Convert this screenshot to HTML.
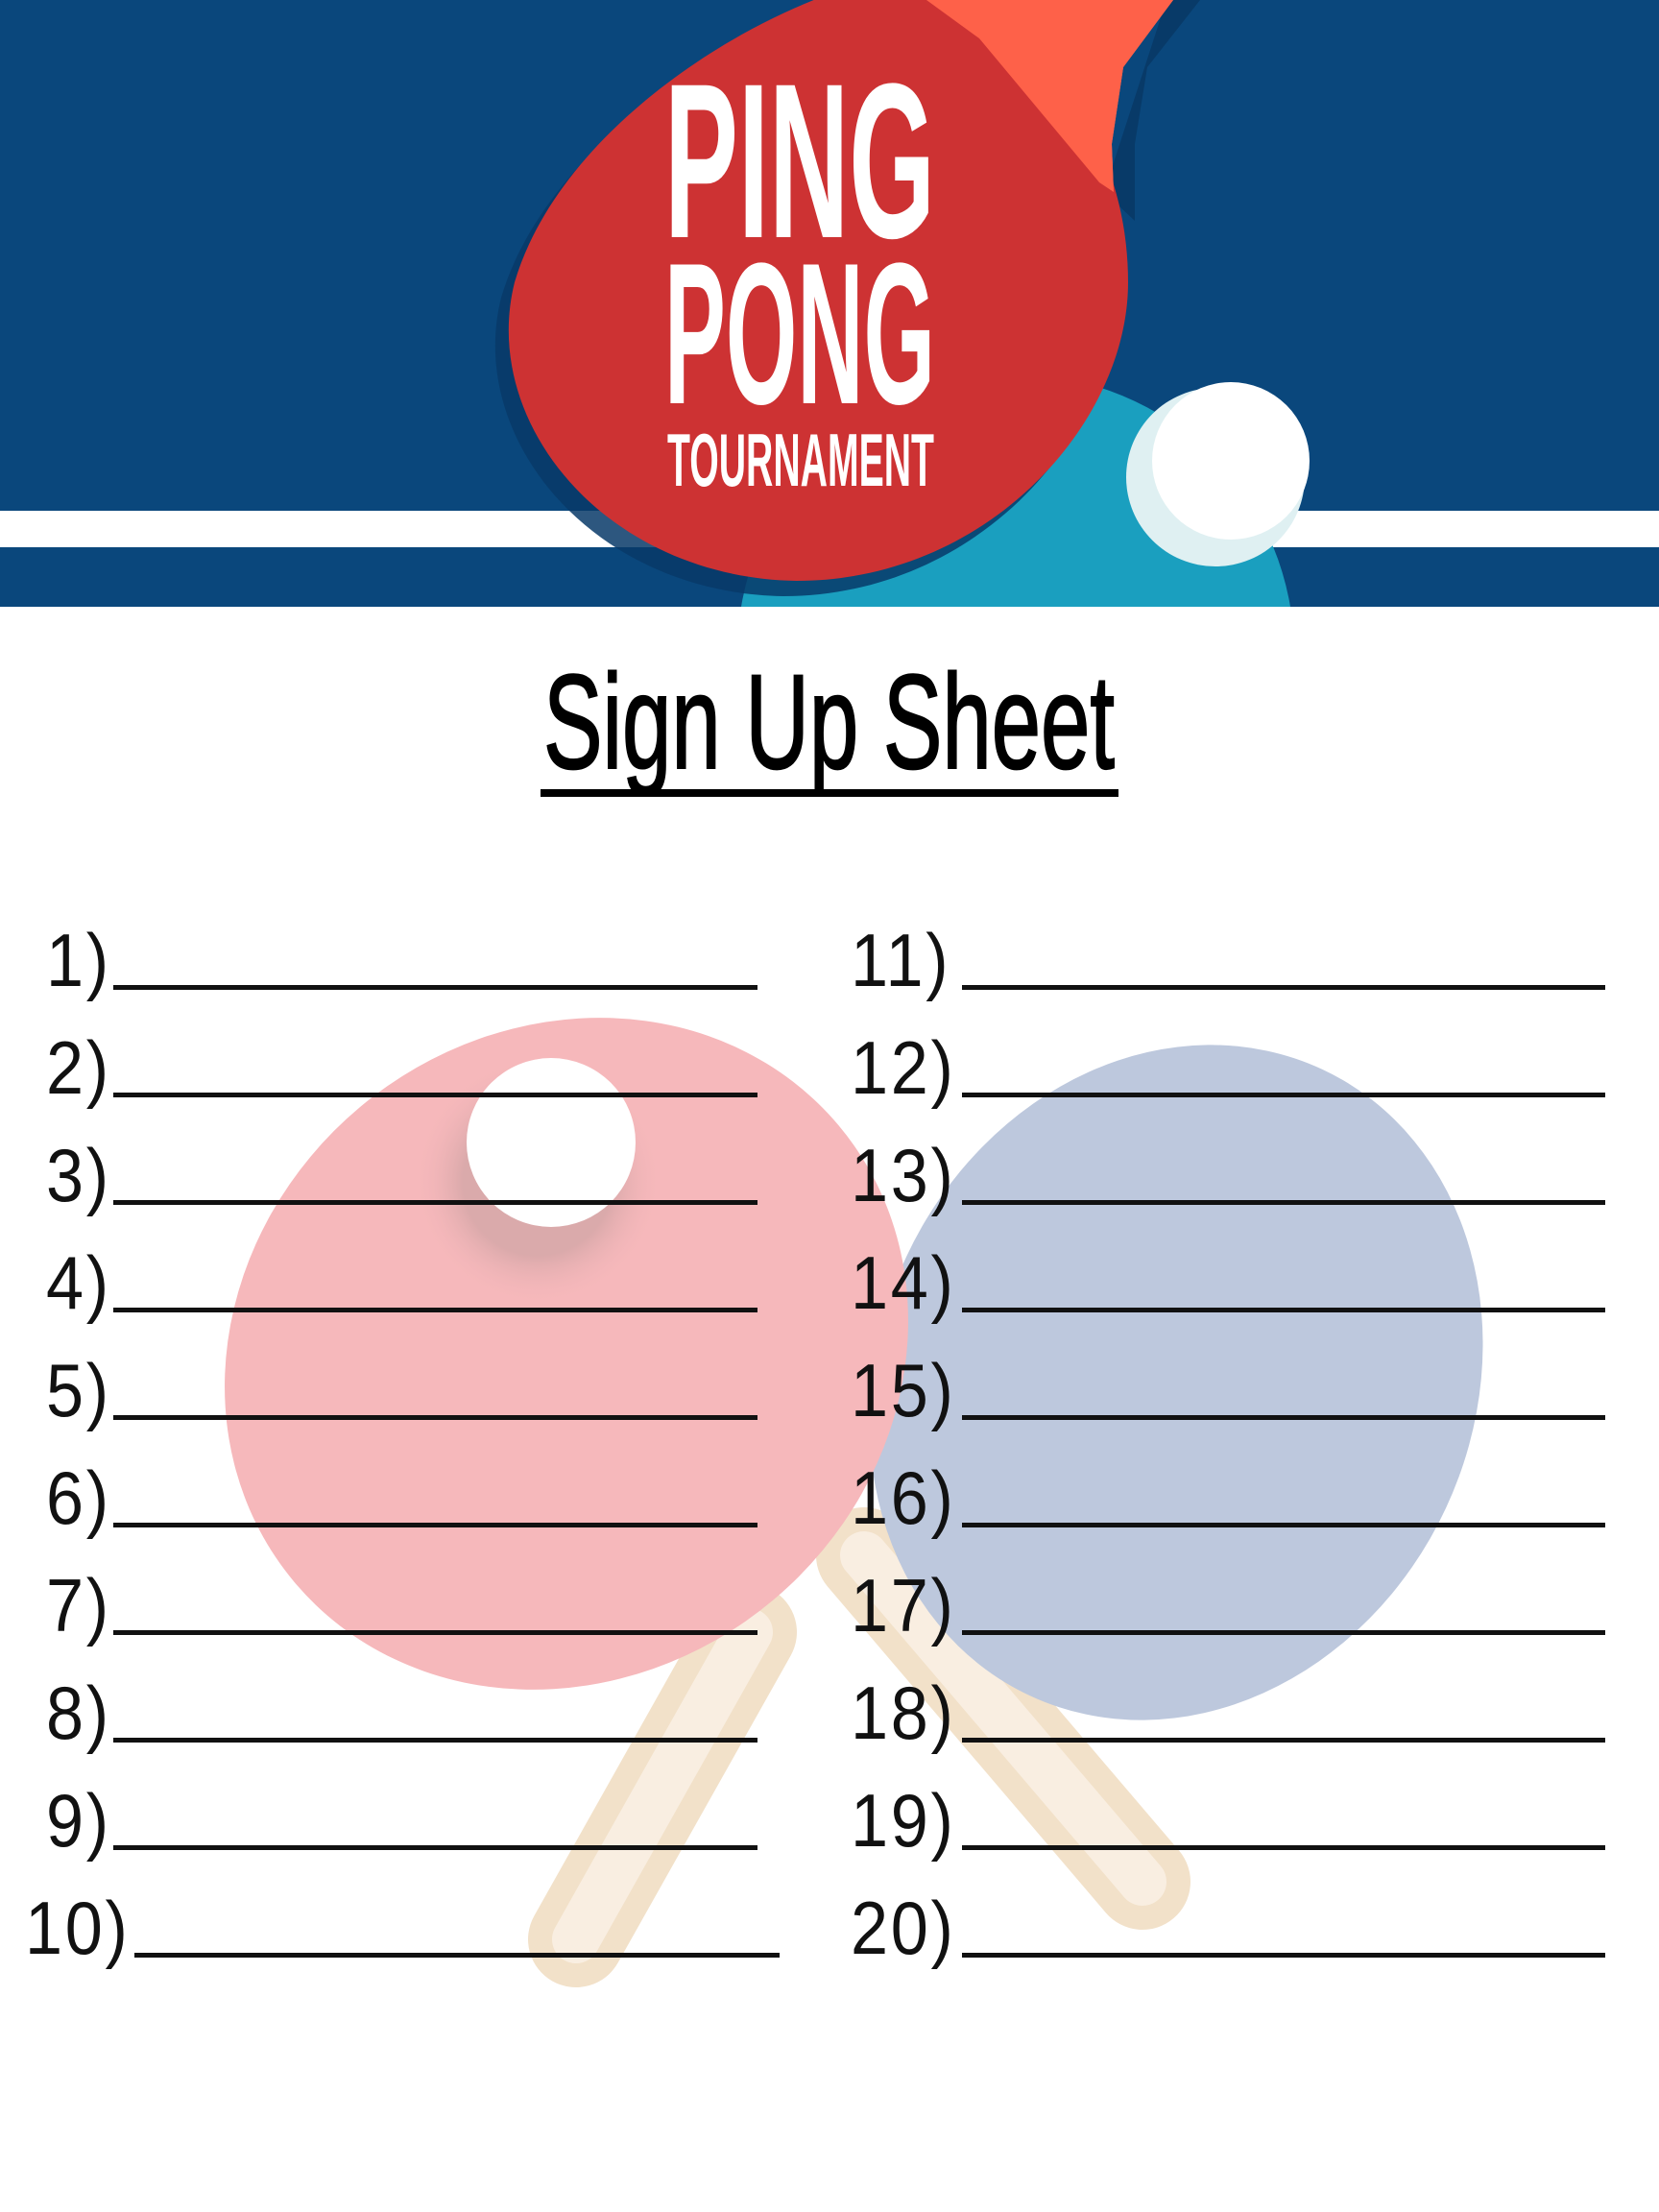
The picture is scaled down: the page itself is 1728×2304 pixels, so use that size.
<!DOCTYPE html>
<html><head><meta charset="utf-8"><style>
body{margin:0;width:1728px;height:2304px;background:#fff;position:relative;overflow:hidden;font-family:"Liberation Sans",sans-serif}
.n{position:absolute;font-size:78px;color:#111;line-height:1;transform:scaleX(0.9);transform-origin:left bottom;letter-spacing:3px}
.l{position:absolute;height:5px;background:#111}
</style></head><body>
<svg width="1728" height="2304" style="position:absolute;left:0;top:0">
<defs>
<radialGradient id="bs" cx="0.5" cy="0.5" r="0.5"><stop offset="0.6" stop-color="#c8a0a0" stop-opacity="0.6"/><stop offset="1" stop-color="#f6b8bb" stop-opacity="0"/></radialGradient>
<clipPath id="hd"><rect x="0" y="0" width="1728" height="632"/></clipPath>
</defs>
<rect x="0" y="0" width="1728" height="632" fill="#0a477c"/>
<g clip-path="url(#hd)">
<rect x="0" y="532" width="1728" height="38" fill="#fff"/>
<circle cx="1058" cy="680" r="290" fill="#1a9fbf"/>
<path d="M1215,0 L1250,0 1195,70 1182,150 1182,230 1150,200 Z" fill="#083a68"/>
<path transform="translate(-14,16)" d="M955,-29 C823,-15 588,118 536,294 C499,441 632,602 830,605 C1028,605 1175,441 1175,294 C1175,191 1131,88 1028,0 Z" fill="#083a68" opacity="0.85"/>
<polygon points="955,0 1222,0 1170,70 1158,150 1160,200 1120,180" fill="#fe6149"/>
<path d="M955,-29 C823,-15 588,118 536,294 C499,441 632,602 830,605 C1028,605 1175,441 1175,294 C1175,191 1131,88 1028,0 Z" fill="#cd3233"/>
<polygon points="965,0 1222,0 1170,70 1158,150 1160,200 1145,190 1020,40" fill="#fe6149"/>
<circle cx="1266" cy="497" r="93" fill="#dff0f2"/>
<circle cx="1282" cy="480" r="82" fill="#fff"/>
</g>
<text x="692" y="247" font-family="Liberation Sans" font-weight="bold" font-size="230" fill="#fff" textLength="282" lengthAdjust="spacingAndGlyphs">PING</text>
<text x="692" y="420" font-family="Liberation Sans" font-weight="bold" font-size="210" fill="#fff" textLength="282" lengthAdjust="spacingAndGlyphs">PONG</text>
<text x="695" y="506" font-family="Liberation Sans" font-weight="bold" font-size="78" fill="#fff" textLength="278" lengthAdjust="spacingAndGlyphs">TOURNAMENT</text>
<g opacity="0.85">
<line x1="780" y1="1700" x2="600" y2="2020" stroke="#f0dcc0" stroke-width="100" stroke-linecap="round"/>
<line x1="780" y1="1700" x2="600" y2="2020" stroke="#f9ecdc" stroke-width="50" stroke-linecap="round"/>
<line x1="900" y1="1620" x2="1190" y2="1960" stroke="#f0dcc0" stroke-width="100" stroke-linecap="round"/>
<line x1="900" y1="1620" x2="1190" y2="1960" stroke="#f9ecdc" stroke-width="50" stroke-linecap="round"/>
</g>
<ellipse cx="1225" cy="1440" rx="360" ry="310" transform="rotate(-65 1225 1440)" fill="#bdc8dd"/>
<ellipse cx="590" cy="1410" rx="370" ry="335" transform="rotate(-40 590 1410)" fill="#f6b8bb"/>
<circle cx="560" cy="1230" r="130" fill="url(#bs)"/>
<circle cx="574" cy="1190" r="88" fill="#fff"/>
<text x="566" y="800" font-family="Liberation Sans" font-size="140" fill="#000" textLength="595" lengthAdjust="spacingAndGlyphs" stroke="#000" stroke-width="2">Sign Up Sheet</text>
<rect x="563" y="822" width="602" height="8" fill="#000"/>
</svg>
<div class="n" style="left:48px;top:961px">1)</div><div class="l" style="left:118px;width:671px;top:1026px"></div>
<div class="n" style="left:48px;top:1073px">2)</div><div class="l" style="left:118px;width:671px;top:1138px"></div>
<div class="n" style="left:48px;top:1185px">3)</div><div class="l" style="left:118px;width:671px;top:1250px"></div>
<div class="n" style="left:48px;top:1297px">4)</div><div class="l" style="left:118px;width:671px;top:1362px"></div>
<div class="n" style="left:48px;top:1409px">5)</div><div class="l" style="left:118px;width:671px;top:1474px"></div>
<div class="n" style="left:48px;top:1521px">6)</div><div class="l" style="left:118px;width:671px;top:1586px"></div>
<div class="n" style="left:48px;top:1633px">7)</div><div class="l" style="left:118px;width:671px;top:1698px"></div>
<div class="n" style="left:48px;top:1745px">8)</div><div class="l" style="left:118px;width:671px;top:1810px"></div>
<div class="n" style="left:48px;top:1857px">9)</div><div class="l" style="left:118px;width:671px;top:1922px"></div>
<div class="n" style="left:26px;top:1969px">10)</div><div class="l" style="left:140px;width:672px;top:2034px"></div>
<div class="n" style="left:886px;top:961px">11)</div><div class="l" style="left:1002px;width:670px;top:1026px"></div>
<div class="n" style="left:886px;top:1073px">12)</div><div class="l" style="left:1002px;width:670px;top:1138px"></div>
<div class="n" style="left:886px;top:1185px">13)</div><div class="l" style="left:1002px;width:670px;top:1250px"></div>
<div class="n" style="left:886px;top:1297px">14)</div><div class="l" style="left:1002px;width:670px;top:1362px"></div>
<div class="n" style="left:886px;top:1409px">15)</div><div class="l" style="left:1002px;width:670px;top:1474px"></div>
<div class="n" style="left:886px;top:1521px">16)</div><div class="l" style="left:1002px;width:670px;top:1586px"></div>
<div class="n" style="left:886px;top:1633px">17)</div><div class="l" style="left:1002px;width:670px;top:1698px"></div>
<div class="n" style="left:886px;top:1745px">18)</div><div class="l" style="left:1002px;width:670px;top:1810px"></div>
<div class="n" style="left:886px;top:1857px">19)</div><div class="l" style="left:1002px;width:670px;top:1922px"></div>
<div class="n" style="left:886px;top:1969px">20)</div><div class="l" style="left:1002px;width:670px;top:2034px"></div>
</body></html>
